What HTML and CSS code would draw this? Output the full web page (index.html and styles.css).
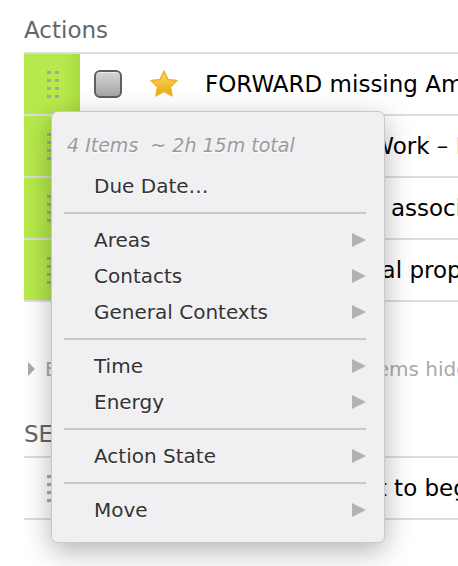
FILE: index.html
```html
<!DOCTYPE html>
<html lang="en">
<head>
<meta charset="utf-8">
<title>Actions</title>
<link rel="stylesheet" href="styles.css">
</head>
<body>
<div class="page">
  <section class="group">
    <h2 class="group-title">Actions</h2>
    <ul class="rows">
      <li class="row row-flag">
        <div class="grip"><span class="dots"><i></i><i></i><i></i><i></i><i></i><i></i><i></i><i></i></span></div>
        <span class="check"></span>
        <svg class="star" viewBox="1.6 1.4 20.8 20.8" aria-hidden="true">
          <defs>
            <linearGradient id="gold" x1="0" y1="0" x2="0" y2="1">
              <stop offset="0" stop-color="#ffe066"/>
              <stop offset="1" stop-color="#e9a414"/>
            </linearGradient>
          </defs>
          <path d="M12 2.4l2.9 6.1 6.6.8-4.9 4.6 1.3 6.6L12 17.2l-5.9 3.3 1.3-6.6-4.9-4.6 6.6-.8z" fill="url(#gold)" stroke="#eeb52c" stroke-width="1.3" stroke-linejoin="round"/>
        </svg>
        <span class="title">FORWARD missing Amazon receipts to accounting</span>
      </li>
      <li class="row row-flag">
        <div class="grip"><span class="dots"><i></i><i></i><i></i><i></i><i></i><i></i><i></i><i></i></span></div>
        <span class="check"></span>
        <span class="star-slot"></span>
        <span class="title">Catch up with Work – Life committee</span>
      </li>
      <li class="row row-flag">
        <div class="grip"><span class="dots"><i></i><i></i><i></i><i></i><i></i><i></i><i></i><i></i></span></div>
        <span class="check"></span>
        <span class="star-slot"></span>
        <span class="title">Pay dues to the association</span>
      </li>
      <li class="row row-flag">
        <div class="grip"><span class="dots"><i></i><i></i><i></i><i></i><i></i><i></i><i></i><i></i></span></div>
        <span class="check"></span>
        <span class="star-slot"></span>
        <span class="title">Send off the final proposal</span>
      </li>
    </ul>
    <div class="hidden-note"><span class="disclosure"></span>Excluded by current filters – 14 items hidden</div>
  </section>
  <section class="group">
    <h2 class="group-title">SETUP</h2>
    <ul class="rows">
      <li class="row">
        <div class="grip"><span class="dots"><i></i><i></i><i></i><i></i><i></i><i></i><i></i><i></i></span></div>
        <span class="check"></span>
        <span class="star-slot"></span>
        <span class="title">Schedule a visit to begin setup</span>
      </li>
    </ul>
  </section>
</div>

<div class="menu" role="menu">
  <div class="menu-header">4 Items&nbsp; ~ 2h 15m total</div>
  <div class="menu-item">Due Date…</div>
  <div class="menu-sep"></div>
  <div class="menu-item">Areas<span class="arrow"></span></div>
  <div class="menu-item">Contacts<span class="arrow"></span></div>
  <div class="menu-item">General Contexts<span class="arrow"></span></div>
  <div class="menu-sep"></div>
  <div class="menu-item">Time<span class="arrow"></span></div>
  <div class="menu-item">Energy<span class="arrow"></span></div>
  <div class="menu-sep"></div>
  <div class="menu-item">Action State<span class="arrow"></span></div>
  <div class="menu-sep"></div>
  <div class="menu-item">Move<span class="arrow"></span></div>
</div>
</body>
</html>
```
FILE: styles.css
```css
html, body {
  margin: 0;
  padding: 0;
  background: #fff;
}
body {
  width: 458px;
  height: 566px;
  overflow: hidden;
  position: relative;
  font-family: "DejaVu Sans", "Liberation Sans", sans-serif;
}
.page {
  margin-left: 24px;
  width: 640px;
}
.group-title {
  margin: 0;
  padding: 15px 0 7px;
  line-height: 30px;
  font-size: 23px;
  font-weight: normal;
  color: #666;
  border-bottom: 2px solid #ddd;
}
.group + .group .group-title {
  margin-top: 20px;
}
.rows {
  list-style: none;
  margin: 0;
  padding: 0;
}
.row {
  display: flex;
  align-items: center;
  height: 60px;
  border-bottom: 2px solid #ddd;
}
.grip {
  width: 56px;
  align-self: stretch;
  display: flex;
  align-items: center;
  justify-content: center;
  flex-shrink: 0;
}
.row-flag .grip {
  background: linear-gradient(to right, #b6ea4c 70%, #aadb43);
}
.dots {
  display: grid;
  grid-template-columns: 4px 4px;
  grid-auto-rows: 3px;
  column-gap: 4px;
  row-gap: 5px;
  margin-left: 2px;
}
.dots i {
  display: block;
  background: #a4a79c;
}
.row:not(.row-flag) .dots i {
  background: #aaa;
}
.check {
  box-sizing: border-box;
  width: 28px;
  height: 28px;
  margin-left: 14px;
  flex-shrink: 0;
  border: 2px solid #5f5f5f;
  border-radius: 6px;
  background: linear-gradient(#d4d4d4, #a6a6a6);
  box-shadow: inset 0 1px 0 rgba(255,255,255,0.55);
}
.star, .star-slot {
  display: block;
  width: 28px;
  height: 28px;
  margin-left: 28px;
  flex-shrink: 0;
}
.title {
  margin-left: 27px;
  font-size: 23px;
  color: #000;
  white-space: nowrap;
}
.hidden-note {
  margin-top: 52px;
  display: flex;
  align-items: center;
  line-height: 30px;
  font-size: 20px;
  color: #aaa;
  white-space: nowrap;
}
.disclosure {
  width: 0;
  height: 0;
  margin-left: 4px;
  margin-right: 10px;
  border-left: 7px solid #aaa;
  border-top: 7px solid transparent;
  border-bottom: 7px solid transparent;
}

/* popup menu */
.menu {
  position: absolute;
  left: 51px;
  top: 111px;
  width: 334px;
  box-sizing: border-box;
  padding: 15px 0 14px;
  background: #f0f0f2;
  border: 1px solid #c9c9c9;
  border-radius: 7px;
  box-shadow: 0 8px 28px rgba(0,0,0,0.30);
  font-size: 20px;
  color: #333;
  text-shadow: 0 1px 0 rgba(255,255,255,0.9);
}
.menu-header {
  padding-left: 15px;
  line-height: 36px;
  margin-bottom: 5px;
  font-size: 19px;
  font-style: italic;
  color: #9a9a9a;
  white-space: nowrap;
}
.menu-item {
  display: flex;
  align-items: center;
  justify-content: space-between;
  height: 36px;
  line-height: 36px;
  padding: 0 18px 0 42px;
  white-space: nowrap;
}
.arrow {
  width: 0;
  height: 0;
  border-left: 14px solid #b2b2b2;
  border-top: 7px solid transparent;
  border-bottom: 7px solid transparent;
}
.menu-sep {
  height: 2px;
  margin: 8px 18px 8px 12px;
  background: #cacaca;
}
```
